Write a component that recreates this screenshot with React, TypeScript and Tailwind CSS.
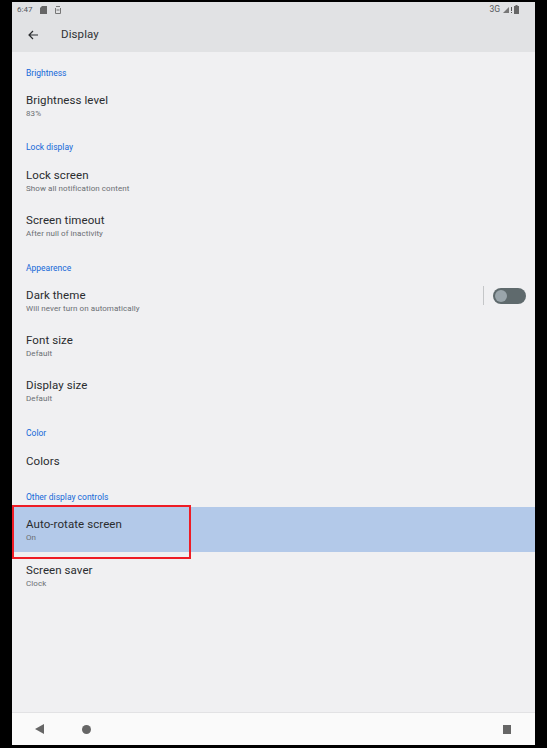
import React from 'react';

const SectionHeader = ({ label, h, pt }: { label: string; h: string; pt: string }) => (
  <div className={`${h} ${pt} pl-[14px] text-[8.5px] leading-[10px] text-[#1468d8]`}>{label}</div>
);

const Row = ({ title, sub, active, className, children }: { title: string; sub?: string; active?: boolean; className?: string; children?: React.ReactNode }) => (
  <div className={`h-[45px] pl-[14px] pr-[9px] flex items-center justify-between ${active ? 'bg-[#b3c9e9]' : ''} ${className ?? ''}`}>
    <div>
      <div className="text-[11.5px] leading-[14px] tracking-[0.08px] text-[#2a2c2f]">{title}</div>
      {sub && <div className="text-[8px] leading-[10px] mt-[2px] tracking-[0.07px] text-[#6a6e72]">{sub}</div>}
    </div>
    {children}
  </div>
);

export default function App() {
  return (
    <div className="w-[547px] h-[748px] bg-black pl-[12px] pr-[12px] pt-[2px] font-['Roboto',sans-serif] antialiased relative overflow-hidden">
      <div className="w-[523px] h-[743px] bg-[#f0f0f2] flex flex-col">
        <div className="h-[50px] bg-[#e1e2e4] shrink-0">
          <div className="h-[15px] flex items-center justify-between pl-[5px] pr-[16px] text-[8px] text-[#55585c]">
            <div className="flex items-center gap-[8px]">
              <span>6:47</span>
              <svg width="7" height="8" viewBox="0 0 7 8"><path d="M2 0H7V8H0V2Z" fill="#666" /></svg>
              <svg width="6" height="8" viewBox="0 0 6 8" fill="none" stroke="#777" strokeWidth="1"><path d="M1 .5H5M.5 2V7.5H5.5V2" /><path d="M1.5 4H4.5" /></svg>
            </div>
            <div className="flex items-center gap-[3px]">
              <span className="text-[8.5px]">3G</span>
              <svg width="7" height="7" viewBox="0 0 7 7"><path d="M0 7L6 1V7Z" fill="#777" /></svg>
              <svg width="1" height="6" viewBox="0 0 1 6" className="-ml-[2px]"><path d="M0 0H1V4H0ZM0 5H1V6H0Z" fill="#555" /></svg>
              <svg width="5" height="9" viewBox="0 0 5 9" className="-ml-[1px]"><path d="M1.5 0H3.5V1H5V9H0V1H1.5Z" fill="#666" /></svg>
            </div>
          </div>
          <div className="h-[35px] flex items-center pl-[16px]">
            <svg width="10" height="10" viewBox="0 0 10 10" fill="none" stroke="#2b2d30" strokeWidth="1.2"><path d="M10 5H1M5 1L1 5L5 9" /></svg>
            <span className="ml-[23px] text-[11.5px] tracking-[0.1px] text-[#303235]">Display</span>
          </div>
        </div>
        <div className="flex-1">
          <SectionHeader label="Brightness" h="h-[31px]" pt="pt-[16px]" />
          <Row title="Brightness level" sub="83%" />
          <SectionHeader label="Lock display" h="h-[30px]" pt="pt-[14px]" />
          <Row title="Lock screen" sub="Show all notification content" />
          <Row title="Screen timeout" sub="After null of inactivity" />
          <SectionHeader label="Appearence" h="h-[30px]" pt="pt-[15px]" />
          <Row title="Dark theme" sub="Will never turn on automatically">
            <div className="flex items-center -mt-[10px]">
              <div className="w-px h-[19px] bg-[#c4c6c8] mr-[9px]" />
              <div className="w-[33px] h-[16px] rounded-full bg-[#5f6a6d] flex items-center pl-[2px]">
                <div className="w-[12px] h-[12px] rounded-full bg-[#9aa5ab]" />
              </div>
            </div>
          </Row>
          <Row title="Font size" sub="Default" />
          <Row title="Display size" sub="Default" />
          <SectionHeader label="Color" h="h-[25px]" pt="pt-[15px]" />
          <Row title="Colors" />
          <SectionHeader label="Other display controls" h="h-[24px]" pt="pt-[9px]" />
          <Row title="Auto-rotate screen" sub="On" active />
          <Row title="Screen saver" sub="Clock" className="pt-[2px]" />
        </div>
        <div className="h-[33px] shrink-0 bg-[#fafafa] border-t border-[#e2e2e4] flex items-center justify-between pl-[23px] pr-[24px]">
          <div className="flex items-center gap-[38px]">
            <svg width="9" height="10" viewBox="0 0 9 10"><path d="M0 5L9 0V10Z" fill="#666" /></svg>
            <div className="w-[9px] h-[9px] rounded-full bg-[#666]" />
          </div>
          <div className="w-[8px] h-[9px] bg-[#666]" />
        </div>
      </div>
      <div className="absolute left-[12px] top-[505px] w-[179px] h-[54px] border-2 border-[#ee1c25]" />
    </div>
  );
}
